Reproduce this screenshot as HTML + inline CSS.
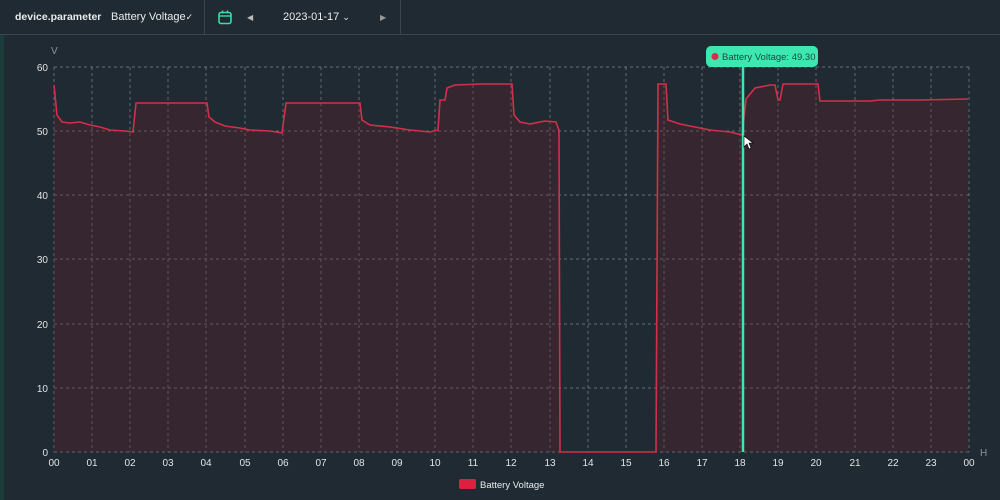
<!DOCTYPE html>
<html><head><meta charset="utf-8"><style>
body{margin:0;width:1000px;height:500px;background:#1f2a32;font-family:"Liberation Sans",sans-serif;overflow:hidden;position:relative}
.top{position:absolute;left:0;top:0;width:1000px;height:34px;border-bottom:1px solid #3a4750}
.t{position:absolute;color:#e8ecee;font-size:11px;top:11px;white-space:nowrap}
.sep{position:absolute;top:0;width:1px;height:34px;background:#3a4750}
</style></head><body>
<div style="position:absolute;left:0;top:35px;width:4px;height:465px;background:#1b3a3a"></div>
<div class="top">
<div class="t" style="left:15px;font-weight:bold;font-size:10.5px">device.parameter</div>
<div class="t" style="left:111px">Battery Voltage<span style="font-size:9px">✓</span></div>
<div class="sep" style="left:204px"></div>
<svg style="position:absolute;left:218px;top:10px" width="14" height="15" viewBox="0 0 14 15"><rect x="1" y="2.5" width="12" height="11" rx="2" fill="none" stroke="#3ddba8" stroke-width="1.6"/><line x1="1" y1="6" x2="13" y2="6" stroke="#3ddba8" stroke-width="1.4"/><line x1="4.5" y1="0.5" x2="4.5" y2="3.5" stroke="#3ddba8" stroke-width="1.5"/><line x1="9.5" y1="0.5" x2="9.5" y2="3.5" stroke="#3ddba8" stroke-width="1.5"/></svg>
<div class="t" style="left:247px;font-size:8px;top:13px;color:#bbb">◀</div>
<div class="t" style="left:283px">2023-01-17 <span style="font-size:9px">⌄</span></div>
<div class="t" style="left:380px;font-size:8px;top:13px;color:#999">▶</div>
<div class="sep" style="left:400px"></div>
</div>
<svg style="position:absolute;left:0;top:0" width="1000" height="500">
<g stroke="#7d868d" stroke-dasharray="3,3" stroke-width="0.7" fill="none">
<line x1="54" y1="67" x2="969" y2="67"/><line x1="54" y1="131" x2="969" y2="131"/><line x1="54" y1="195" x2="969" y2="195"/><line x1="54" y1="259" x2="969" y2="259"/><line x1="54" y1="324" x2="969" y2="324"/><line x1="54" y1="388" x2="969" y2="388"/><line x1="54" y1="452" x2="969" y2="452"/>
<path d="M54 67V452M92 67V452M130 67V452M168 67V452M206 67V452M245 67V452M283 67V452M321 67V452M359 67V452M397 67V452M435 67V452M473 67V452M511 67V452M550 67V452M588 67V452M626 67V452M664 67V452M702 67V452M740 67V452M778 67V452M816 67V452M855 67V452M893 67V452M931 67V452M969 67V452"/>
</g>
<path d="M54 85L57 115L62 122L70 123L80 122L90 125L100 127L110 130L125 131L133 132L136 103L207 103L209 117L215 122L225 126L240 128L250 130L270 131L282 133L286 103L360 103L362 120L370 125L390 127L410 130L430 132L438 130L440 100L445 100L447 88L455 85L480 84L512 84L514 115L520 122L530 124L545 121L556 122L559 130L560 452L656 452L658 84L666 84L668 120L680 124L700 128L710 130L730 132L742 135L746 99L755 88L770 85L775 85L778 100L780 100L783 84L818 84L820 101L870 101L880 100L920 100L968 99L968 452L54 452Z" fill="rgba(110,30,45,0.3)" stroke="none"/>
<path d="M54 85L57 115L62 122L70 123L80 122L90 125L100 127L110 130L125 131L133 132L136 103L207 103L209 117L215 122L225 126L240 128L250 130L270 131L282 133L286 103L360 103L362 120L370 125L390 127L410 130L430 132L438 130L440 100L445 100L447 88L455 85L480 84L512 84L514 115L520 122L530 124L545 121L556 122L559 130L560 452L656 452L658 84L666 84L668 120L680 124L700 128L710 130L730 132L742 135L746 99L755 88L770 85L775 85L778 100L780 100L783 84L818 84L820 101L870 101L880 100L920 100L968 99" fill="none" stroke="#d2304a" stroke-width="1.6"/>
<g fill="#e0e4e6" font-size="10" text-anchor="end">
<text x="48" y="71">60</text><text x="48" y="135">50</text><text x="48" y="199">40</text><text x="48" y="263">30</text><text x="48" y="328">20</text><text x="48" y="392">10</text><text x="48" y="456">0</text>
</g>
<text x="51" y="54" fill="#8a939a" font-size="10">V</text>
<text x="980" y="456" fill="#8a939a" font-size="10">H</text>
<g fill="#e0e4e6" font-size="10" text-anchor="middle">
<text x="54" y="466">00</text><text x="92" y="466">01</text><text x="130" y="466">02</text><text x="168" y="466">03</text><text x="206" y="466">04</text><text x="245" y="466">05</text><text x="283" y="466">06</text><text x="321" y="466">07</text><text x="359" y="466">08</text><text x="397" y="466">09</text><text x="435" y="466">10</text><text x="473" y="466">11</text><text x="511" y="466">12</text><text x="550" y="466">13</text><text x="588" y="466">14</text><text x="626" y="466">15</text><text x="664" y="466">16</text><text x="702" y="466">17</text><text x="740" y="466">18</text><text x="778" y="466">19</text><text x="816" y="466">20</text><text x="855" y="466">21</text><text x="893" y="466">22</text><text x="931" y="466">23</text><text x="969" y="466">00</text>
</g>
<line x1="743" y1="66" x2="743" y2="452" stroke="#3de8b0" stroke-width="2.5"/>
<rect x="706" y="46" width="112" height="21" rx="5" fill="#3de8b0"/>
<circle cx="715" cy="56.5" r="3.5" fill="#d2304a"/>
<text x="722" y="60" font-size="9.5" fill="#1f4a40">Battery Voltage: 49.30</text>
<path d="M744 136L744 147L747 144L749 149L751 148L749 143L753 143Z" fill="#fff" stroke="#000" stroke-width="0.6"/>
<rect x="459" y="479" width="17" height="10" rx="2" fill="#dc2040"/>
<text x="480" y="488" font-size="9.5" fill="#e8ecee">Battery Voltage</text>
</svg>
</body></html>
